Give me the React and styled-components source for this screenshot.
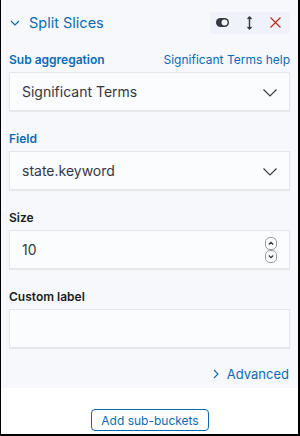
import React from "react";
import styled, { createGlobalStyle } from "styled-components";

const Global = createGlobalStyle`
  html, body { margin: 0; padding: 0; background: #000; }
  body { font-family: Inter, "Noto Sans", sans-serif; }
  * { box-sizing: border-box; }
`;

const Frame = styled.div`
  width: 300px;
  height: 436px;
  background: #000;
  padding: 0 2px 2px 1px;
`;

const Inner = styled.div`
  height: 100%;
  background: #fff;
  display: flex;
  flex-direction: column;
`;

const Panel = styled.div`
  background: #f7f8fc;
  padding: 12px 8px 4px 8px;
  display: flex;
  flex-direction: column;
`;

const Header = styled.div`
  display: flex;
  align-items: center;
  height: 21px;
  margin-bottom: 19px;
`;

const Title = styled.div`
  display: flex;
  align-items: center;
  gap: 9px;
  color: #0b6bb4;
  font-size: 14.5px;
  flex: 1;
  padding-left: 1px;
`;

const Actions = styled.div`
  display: flex;
  align-items: center;
  background: #eff2f8;
  border-radius: 4px;
  height: 22px;
  padding: 0 9px 0 6px;
  gap: 18px;
`;

const Row = styled.div`
  display: flex;
  flex-direction: column;
  margin-bottom: ${(p) => p.$mb ?? 20}px;
`;

const LabelRow = styled.div`
  display: flex;
  justify-content: space-between;
  align-items: baseline;
  height: 16px;
  margin-bottom: 4px;
`;

const Label = styled.label`
  font-size: 12px;
  font-weight: 600;
  color: ${(p) => (p.$active ? "#0b6bb4" : "#1a1c21")};
`;

const Link = styled.span`
  font-size: 12px;
  color: #0b6bb4;
`;

const Box = styled.div`
  height: 39px;
  background: #fbfcfd;
  border: 1px solid #e4e6ec;
  box-shadow: 0 1px 1px rgba(0, 0, 0, 0.06);
  display: flex;
  align-items: center;
  padding: 0 11px 0 12px;
  font-size: 14px;
  color: #343741;
`;

const Value = styled.span`
  flex: 1;
`;

const AdvancedRow = styled.div`
  display: flex;
  justify-content: flex-end;
  align-items: center;
  gap: 8px;
  color: #0b6bb4;
  font-size: 13px;
  height: 20px;
  margin-top: 16px;
  padding-right: 1px;
`;

const Footer = styled.div`
  display: flex;
  justify-content: center;
  padding-top: 21px;
`;

const Button = styled.button`
  font-family: inherit;
  font-size: 12px;
  color: #0b6bb4;
  background: #fff;
  border: 1px solid #0b6bb4;
  border-radius: 4px;
  height: 22px;
  padding: 0 9px;
  margin-left: 1px;
`;

const Stepper = styled.div`
  display: flex;
  flex-direction: column;
  margin-right: 1px;
`;

const Chevron = () => (
  <svg width="16" height="16" viewBox="0 0 16 16" fill="none" stroke="#343741" strokeWidth="1.1">
    <path d="M1.5 5.5l6.5 6.5 6.5-6.5" />
  </svg>
);

export default function App() {
  return (
    <>
      <Global />
      <Frame>
        <Inner>
          <Panel>
            <Header>
              <Title>
                <svg width="10" height="10" viewBox="0 0 10 10" fill="none" stroke="#0b6bb4" strokeWidth="1.2">
                  <path d="M1 3l4 4 4-4" />
                </svg>
                Split Slices
              </Title>
              <Actions>
                <svg width="13" height="9" viewBox="0 0 13 9">
                  <rect x="0" y="0" width="13" height="9" rx="4.5" fill="#343741" />
                  <circle cx="8.5" cy="4.5" r="3" fill="#f2f4f8" />
                </svg>
                <svg width="5" height="14" viewBox="0 0 5 14" fill="none" stroke="#343741" strokeWidth="1.4">
                  <path d="M2.5 1v12M0.5 3l2-2 2 2M0.5 11l2 2 2-2" />
                </svg>
                <svg width="11" height="11" viewBox="0 0 11 11" fill="none" stroke="#bd271e" strokeWidth="1.1">
                  <path d="M0.5 0.5l10 10M10.5 0.5l-10 10" />
                </svg>
              </Actions>
            </Header>
            <Row>
              <LabelRow>
                <Label $active>Sub aggregation</Label>
                <Link>Significant Terms help</Link>
              </LabelRow>
              <Box>
                <Value>Significant Terms</Value>
                <Chevron />
              </Box>
            </Row>
            <Row>
              <LabelRow>
                <Label $active>Field</Label>
              </LabelRow>
              <Box>
                <Value>state.keyword</Value>
                <Chevron />
              </Box>
            </Row>
            <Row>
              <LabelRow>
                <Label>Size</Label>
              </LabelRow>
              <Box>
                <Value>10</Value>
                <Stepper>
                  <svg width="12" height="13" viewBox="0 0 12 13" fill="none">
                    <rect x="0.5" y="0.5" width="11" height="12" rx="4.5" stroke="#9a9ca3" />
                    <path d="M3.8 7.5l2.2-2.2 2.2 2.2" stroke="#343741" strokeWidth="1.2" />
                  </svg>
                  <svg width="12" height="13" viewBox="0 0 12 13" fill="none">
                    <rect x="0.5" y="0.5" width="11" height="12" rx="4.5" stroke="#9a9ca3" />
                    <path d="M3.8 5.5l2.2 2.2 2.2-2.2" stroke="#343741" strokeWidth="1.2" />
                  </svg>
                </Stepper>
              </Box>
            </Row>
            <Row $mb={0}>
              <LabelRow>
                <Label>Custom label</Label>
              </LabelRow>
              <Box />
            </Row>
            <AdvancedRow>
              <svg width="6" height="10" viewBox="0 0 6 10" fill="none" stroke="#0b6bb4" strokeWidth="1.1">
                <path d="M1 1l4 4-4 4" />
              </svg>
              Advanced
            </AdvancedRow>
          </Panel>
          <Footer>
            <Button>Add sub-buckets</Button>
          </Footer>
        </Inner>
      </Frame>
    </>
  );
}
